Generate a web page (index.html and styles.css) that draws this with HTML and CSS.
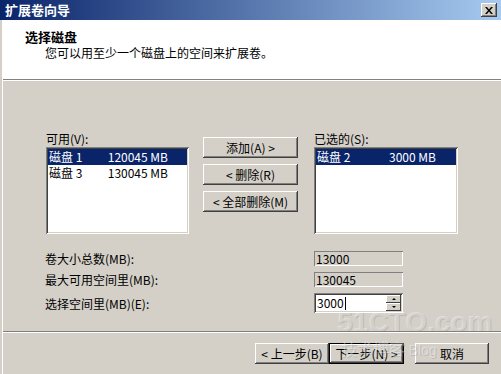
FILE: index.html
```html
<!DOCTYPE html>
<html lang="zh-CN">
<head>
    <meta charset="UTF-8">
    <title>扩展卷向导</title>
    <link rel="stylesheet" href="styles.css">
</head>
<body>
    <div class="window">
        <!-- Title bar -->
        <div class="titlebar">
            <span>扩展卷向导</span>
            <span class="close">
                <svg width="8" height="7" viewBox="0 0 8 7"><path d="M0 0h2l2 2.5 2-2.5h2l-3 3.5 3 3.5h-2l-2-2.5-2 2.5h-2l3-3.5z" fill="#000"/></svg>
            </span>
        </div>

        <div class="frame">
            <div class="inner">
                <!-- Header -->
                <div class="header">
                    <div class="header-title">选择磁盘</div>
                    <div class="header-sub">您可以用至少一个磁盘上的空间来扩展卷。</div>
                </div>

                <div class="body">
                    <!-- Disk picker -->
                    <div class="picker">
                        <div class="col">
                            <div class="label">可用(V):</div>
                            <div class="listbox">
                                <div class="row selected"><span class="name">磁盘 1</span><span class="size">120045 MB</span></div>
                                <div class="row"><span class="name">磁盘 3</span><span class="size">130045 MB</span></div>
                            </div>
                        </div>
                        <div class="moves">
                            <button class="btn move">添加(A) &gt;</button>
                            <button class="btn move">&lt; 删除(R)</button>
                            <button class="btn move">&lt; 全部删除(M)</button>
                        </div>
                        <div class="col right">
                            <div class="label">已选的(S):</div>
                            <div class="listbox">
                                <div class="row selected"><span class="name">磁盘 2</span><span class="size">3000 MB</span></div>
                            </div>
                        </div>
                    </div>

                    <!-- Size fields -->
                    <div class="fields">
                        <div class="flabel">卷大小总数(MB):</div>
                        <div class="readonly">13000</div>
                        <div class="flabel">最大可用空间里(MB):</div>
                        <div class="readonly">130045</div>
                        <div class="flabel">选择空间里(MB)(E):</div>
                        <div class="spin">
                            <div class="spin-text">3000<span class="caret"></span></div>
                            <div class="spin-btns">
                                <span class="spin-btn"><span class="arrow-up"></span></span>
                                <span class="spin-btn"><span class="arrow-down"></span></span>
                            </div>
                        </div>
                    </div>

                    <!-- Footer buttons -->
                    <div class="footer">
                        <button class="btn nav">&lt; 上一步(B)</button>
                        <button class="btn nav default">下一步(N) &gt;</button>
                        <button class="btn nav cancel">取消</button>
                    </div>
                </div>
            </div>
        </div>

        <!-- Watermark over the dialog -->
        <div class="watermark">
            <div class="wm-big">51CTO.com</div>
            <div class="wm-small">技术博客 <span>Blog</span></div>
        </div>
    </div>
</body>
</html>
```

FILE: styles.css
```css
body {
    margin: 0;
    font-family: "Noto Sans CJK SC", "Liberation Sans", sans-serif;
    font-size: 12px;
    color: #000;
}

.window {
    position: relative;
    width: 501px;
    height: 374px;
    display: flex;
    flex-direction: column;
    background: #d4d0c8;
    overflow: hidden;
}

.titlebar {
    flex: none;
    height: 20px;
    padding: 0 4px 0 5px;
    display: flex;
    align-items: center;
    justify-content: space-between;
    background: linear-gradient(to right, #0a246a, #a6caf0);
    color: #fff;
    font-weight: bold;
    font-size: 13px;
    line-height: 20px;
}

.close {
    width: 16px;
    height: 14px;
    display: flex;
    align-items: center;
    justify-content: center;
    background: #d4d0c8;
    box-shadow: inset -1px -1px #404040, inset 1px 1px #fff, inset -2px -2px #808080;
}

.frame {
    flex: 1;
    display: flex;
    border-left: 2px solid #d4d0c8;
}

.inner {
    flex: 1;
    display: flex;
    flex-direction: column;
    border-left: 1px solid #fff;
}

.header {
    flex: none;
    height: 60px;
    box-sizing: border-box;
    padding: 10px 0 0 22px;
    background: #fff;
    border-bottom: 1px solid #808080;
}

.header-title {
    font-weight: bold;
    font-size: 13px;
    line-height: 14px;
}

.header-sub {
    margin: 2px 0 0 20px;
    line-height: 14px;
}

.body {
    flex: 1;
    display: flex;
    flex-direction: column;
    border-top: 1px solid #fff;
}

/* picker */
.picker {
    display: flex;
    margin-top: 51px;
    padding-left: 43px;
}

.col {
    width: 143px;
}

.col.right {
    width: 144px;
    margin-left: 16px;
}

.label {
    line-height: 14px;
    margin-bottom: 1px;
}

.listbox {
    height: 87px;
    box-sizing: border-box;
    padding: 2px;
    background: #fff;
    box-shadow: inset 1px 1px #808080, inset -1px -1px #fff, inset 2px 2px #404040, inset -2px -2px #d4d0c8;
}

.row {
    display: flex;
    height: 16px;
    line-height: 16px;
    white-space: nowrap;
}

.row.selected {
    background: #0a246a;
    color: #fff;
}

.name {
    width: 50px;
    padding-left: 1px;
}

.size {
    width: 69px;
    text-align: right;
}

.moves {
    width: 95px;
    margin-left: 14px;
    padding-top: 5px;
    display: flex;
    flex-direction: column;
    gap: 6px;
}

.btn {
    height: 21px;
    padding: 0;
    border: none;
    font: inherit;
    color: #000;
    background: #d4d0c8;
    box-shadow: inset -1px -1px #404040, inset 1px 1px #fff, inset -2px -2px #808080;
}

/* fields */
.fields {
    display: grid;
    grid-template-columns: 269px 89px;
    grid-template-rows: 15px 15px 20px;
    row-gap: 6px;
    margin-top: 17px;
    padding-left: 42px;
}

.flabel {
    line-height: 15px;
    align-self: center;
}

.readonly {
    padding-left: 2px;
    line-height: 15px;
    box-shadow: inset 1px 1px #808080, inset -1px -1px #fff;
}

.spin {
    display: flex;
    padding: 2px;
    background: #fff;
    box-shadow: inset 1px 1px #808080, inset -1px -1px #fff, inset 2px 2px #404040, inset -2px -2px #d4d0c8;
}

.spin-text {
    flex: 1;
    line-height: 16px;
    padding-left: 1px;
}

.caret {
    display: inline-block;
    width: 1px;
    height: 13px;
    margin-left: 1px;
    vertical-align: -2px;
    background: #000;
}

.spin-btns {
    width: 15px;
    display: flex;
    flex-direction: column;
}

.spin-btn {
    flex: 1;
    display: flex;
    align-items: center;
    justify-content: center;
    background: #d4d0c8;
    box-shadow: inset -1px -1px #404040, inset 1px 1px #fff;
}

.arrow-up, .arrow-down {
    width: 0;
    height: 0;
    border-left: 2px solid transparent;
    border-right: 2px solid transparent;
}

.arrow-up {
    border-bottom: 2px solid #000;
}

.arrow-down {
    border-top: 2px solid #000;
}

/* footer */
.footer {
    margin-top: auto;
    display: flex;
    justify-content: flex-end;
    padding: 11px 12px 10px 0;
    border-top: 1px solid #808080;
    box-shadow: inset 0 1px #fff;
}

.nav {
    width: 74px;
}

.nav.default {
    width: 75px;
    border: 1px solid #000;
}

.nav.cancel {
    margin-left: 11px;
}

/* watermark */
.watermark {
    position: absolute;
    left: 337px;
    top: 306px;
    color: rgba(255, 255, 255, 0.35);
    text-shadow: 1px 1px rgba(120, 120, 120, 0.25);
    pointer-events: none;
    white-space: nowrap;
}

.wm-big {
    font-family: "Liberation Sans", sans-serif;
    font-weight: bold;
    font-size: 28px;
    line-height: 32px;
}

.wm-small {
    font-size: 16px;
    line-height: 20px;
    padding-left: 4px;
}

.wm-small span {
    font-family: "Liberation Sans", sans-serif;
    font-size: 14px;
}
```
